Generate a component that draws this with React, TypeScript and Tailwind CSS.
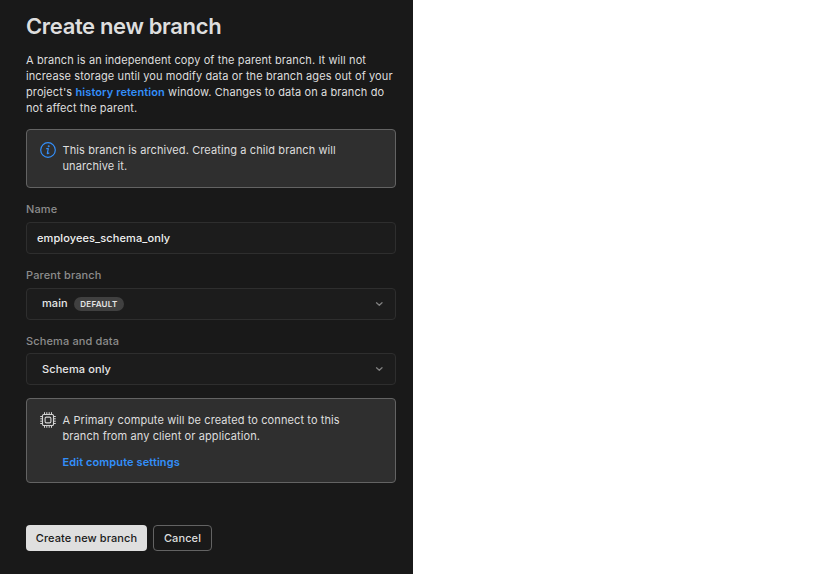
import type { ReactNode } from "react";

function Chevron() {
  return (
    <svg className="h-2 w-2 shrink-0" viewBox="0 0 8 8" fill="none" stroke="#808080" strokeWidth="1.3" strokeLinecap="round" strokeLinejoin="round">
      <path d="M1.5 2.8 4.3 5.2 7 2.8" />
    </svg>
  );
}

function InfoIcon() {
  return (
    <svg className="h-4 w-4 shrink-0" viewBox="0 0 16 16" fill="none" stroke="#338ffa" strokeWidth="1.2" strokeLinecap="round" strokeLinejoin="round">
      <circle cx="8" cy="8" r="7.3" />
      <path d="M6.7 6.7h1.6L7.3 11.3q0 .7 1.6-.2" />
      <circle cx="8.7" cy="4.3" r="0.4" fill="#338ffa" />
    </svg>
  );
}

function ChipIcon() {
  return (
    <svg className="h-4 w-4 shrink-0" viewBox="0 0 16 16" fill="none" stroke="#d4d4d4" strokeWidth="1.1" strokeLinecap="round">
      <rect x="2.5" y="2.5" width="11" height="11" rx="1.3" />
      <rect x="5.1" y="5.1" width="5.8" height="5.8" rx="1.3" />
      <path strokeWidth="1" d="M4.5 .6v1.9M6.8 .6v1.9M9.2 .6v1.9M11.5 .6v1.9M4.5 13.5v1.9M6.8 13.5v1.9M9.2 13.5v1.9M11.5 13.5v1.9M.6 4.5h1.9M.6 6.8h1.9M.6 9.2h1.9M.6 11.5h1.9M13.5 4.5h1.9M13.5 6.8h1.9M13.5 9.2h1.9M13.5 11.5h1.9" />
    </svg>
  );
}

function Field({ label, children, className }: { label: string; children: ReactNode; className: string }) {
  return (
    <div className={className}>
      <div className="h-4 font-medium tracking-[0.13px] text-[#8c8c8c]">{label}</div>
      <div className="mt-[5px] flex h-8 w-full items-center rounded border border-[#2e2e2e] bg-[#1c1c1c] font-medium text-[#e6e6e6]">{children}</div>
    </div>
  );
}

export default function App() {
  return (
    <div className="h-[574px] w-[818px] bg-white font-['Inter',sans-serif] text-[11px] leading-4 tracking-[0.1px] text-[#dedede]">
      <main className="h-full w-[413px] bg-[#191919] pt-3 pr-[17px] pl-[26px]">
        <h1 className="h-7 text-[22px] leading-7 font-semibold tracking-[-0.35px] whitespace-nowrap">Create new branch</h1>
        <p className="mt-3 whitespace-nowrap">
          A branch is an independent copy of the parent branch. It will not<br />
          increase storage until you modify data or the branch ages out of your<br />
          project's <a className="font-semibold text-[#338ffa]">history retention</a> window. Changes to data on a branch do<br />
          not affect the parent.
        </p>
        <section className="mt-[13px] flex h-[59px] gap-[6.5px] rounded border border-[#636363] bg-[#2f2f2f] px-[13px] pt-3">
          <InfoIcon />
          <p className="whitespace-nowrap">This branch is archived. Creating a child branch will<br />unarchive it.</p>
        </section>
        <Field label="Name" className="mt-[13px]"><span className="pl-[10px] text-[#f0f0f0]">employees_schema_only</span></Field>
        <Field label="Parent branch" className="mt-[13px]">
          <span className="-mt-0.5 pl-[15px]">main</span>
          <span className="ml-[6px] flex h-[14px] w-[50px] items-center justify-center rounded-full bg-[#404040] text-[8px] font-semibold tracking-[0.3px]">DEFAULT</span>
          <span className="ml-auto pr-3"><Chevron /></span>
        </Field>
        <Field label="Schema and data" className="mt-[13px] -mb-px [&>div:last-child]:mt-1">
          <span className="pl-[15px]">Schema only</span>
          <span className="ml-auto pr-3"><Chevron /></span>
        </Field>
        <section className="mt-[14px] flex h-[85px] gap-[6.5px] rounded border border-[#636363] bg-[#2f2f2f] px-[13px] pt-[13px]">
          <ChipIcon />
          <div>
            <p className="whitespace-nowrap">A Primary compute will be created to connect to this<br />branch from any client or application.</p>
            <a className="mt-[10px] block font-semibold text-[#338ffa]">Edit compute settings</a>
          </div>
        </section>
        <div className="mt-[42px] flex gap-[6px] font-medium">
          <button className="h-[26px] w-[121px] rounded bg-[#dfdfdf] text-[#1a1a1a]">Create new branch</button>
          <button className="h-[26px] w-[59px] rounded border border-[#636363]">Cancel</button>
        </div>
      </main>
    </div>
  );
}
